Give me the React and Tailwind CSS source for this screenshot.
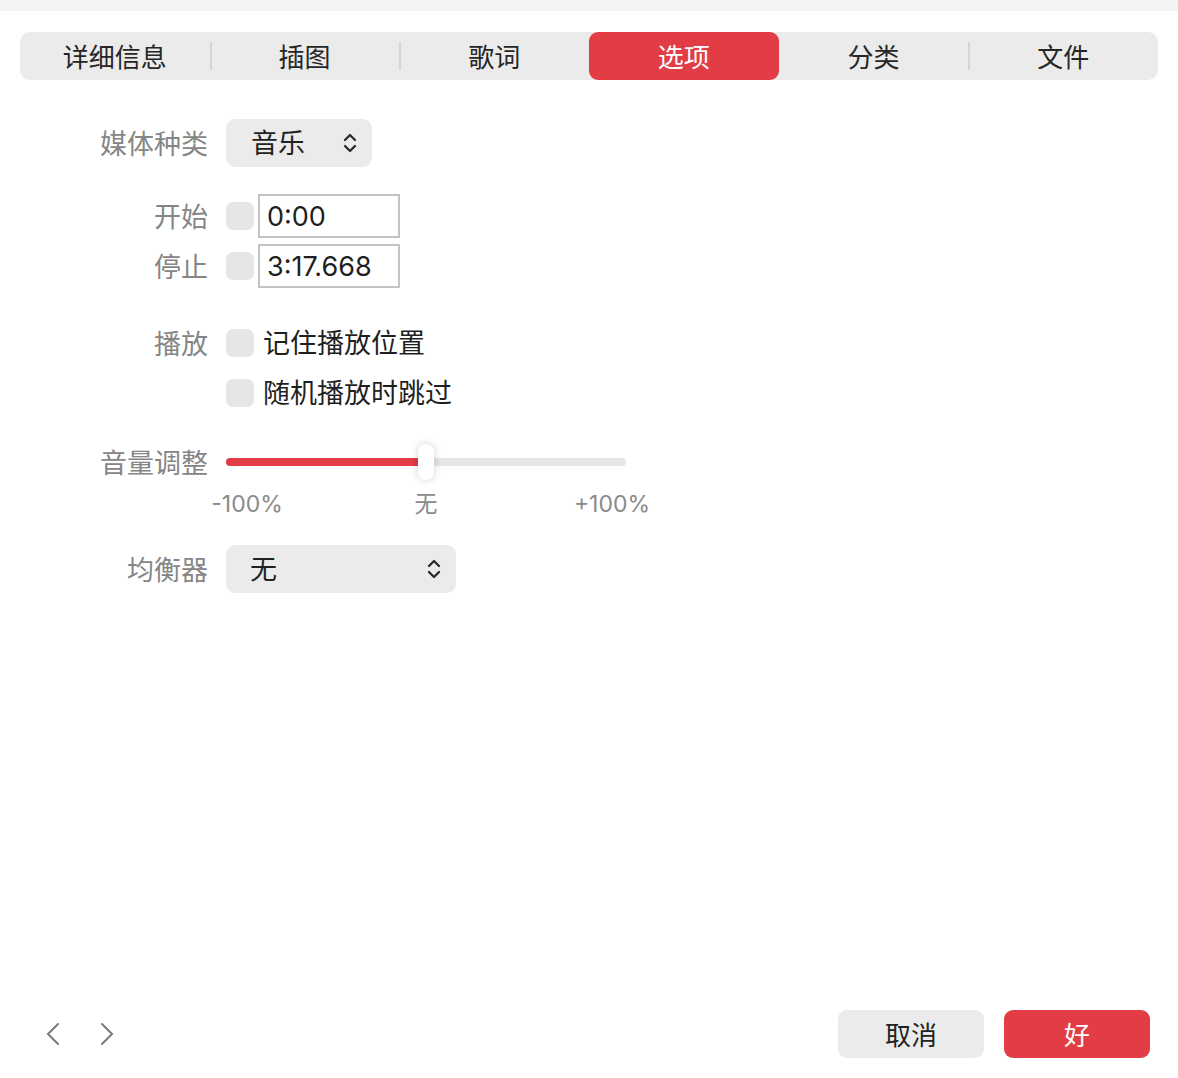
// Song info dialog — "选项" (Options) tab

const FONT = { fontFamily: '"Inter", "Noto Sans CJK SC", sans-serif' };

const tabs = ["详细信息", "插图", "歌词", "选项", "分类", "文件"];
const ACTIVE = 3;

function UpDown() {
  return (
    <svg width="16" height="24" viewBox="0 0 16 24" fill="none" stroke="#2a2a2a" strokeWidth="2.3" strokeLinecap="round" strokeLinejoin="round">
      <path d="M3 9 L8 4 L13 9" />
      <path d="M3 15 L8 20 L13 15" />
    </svg>
  );
}

function Check() {
  return <div className="w-[28px] h-[28px] rounded-[7px] bg-[#e6e6e6] shrink-0" />;
}

function Label({ children }) {
  return <div className="w-[208px] shrink-0 text-right text-[27px] text-[#858585] leading-none pt-[2px]">{children}</div>;
}

export default function App() {
  return (
    <div style={FONT} className="w-[1178px] h-[1078px] bg-white flex flex-col">
      <div className="h-[11px] bg-[#f4f4f4]" />

      {/* tab strip */}
      <div className="mt-[21px] mx-[20px] h-[48px] rounded-[10px] bg-[#ebebeb] flex items-center">
        {tabs.map((t, i) => (
          <div key={t} className="flex-1 h-full flex items-center relative">
            {i > 0 && i !== ACTIVE && i !== ACTIVE + 1 && (
              <div className="absolute left-0 top-[10px] h-[28px] w-[2px] bg-[#d4d4d4]" />
            )}
            <div
              className={`w-full h-full flex items-center justify-center text-[26px] pt-[2px] rounded-[9px] ${
                i === ACTIVE ? "bg-[#e23c45] text-white" : "text-[#262626]"
              }`}
            >
              {t}
            </div>
          </div>
        ))}
      </div>

      {/* media kind */}
      <div className="mt-[39px] flex items-center h-[48px]">
        <Label>媒体种类</Label>
        <div className="ml-[18px] w-[146px] h-[48px] rounded-[9px] bg-[#ebebeb] flex items-center pl-[25px] pr-[14px] justify-between">
          <span className="text-[27px] text-[#222] pt-[2px]">音乐</span>
          <UpDown />
        </div>
      </div>

      {/* start / stop */}
      <div className="mt-[27px] flex items-center h-[44px]">
        <Label>开始</Label>
        <div className="ml-[18px]"><Check /></div>
        <div className="ml-[4px] w-[142px] h-[44px] border-2 border-[#c4c4c4] flex items-center pl-[7px] pt-[2px] text-[27px] text-[#1f1f1f]">0:00</div>
      </div>
      <div className="mt-[6px] flex items-center h-[44px]">
        <Label>停止</Label>
        <div className="ml-[18px]"><Check /></div>
        <div className="ml-[4px] w-[142px] h-[44px] border-2 border-[#c4c4c4] flex items-center pl-[7px] pt-[2px] text-[27px] text-[#1f1f1f]">3:17.668</div>
      </div>

      {/* playback */}
      <div className="mt-[35px] flex items-center h-[40px]">
        <Label>播放</Label>
        <div className="ml-[18px]"><Check /></div>
        <span className="ml-[9px] text-[27px] text-[#1f1f1f] pt-[2px]">记住播放位置</span>
      </div>
      <div className="mt-[10px] flex items-center h-[40px]">
        <div className="w-[208px] shrink-0" />
        <div className="ml-[18px]"><Check /></div>
        <span className="ml-[9px] text-[27px] text-[#1f1f1f] pt-[2px]">随机播放时跳过</span>
      </div>

      {/* volume */}
      <div className="mt-[29px] flex items-center h-[40px]">
        <Label>音量调整</Label>
        <div className="ml-[18px] w-[400px] h-[8px] rounded-full bg-[#e6e6e6] relative">
          <div className="h-full w-[200px] rounded-full bg-[#e23c45]" />
          <div className="absolute left-[192px] top-[-14px] w-[16px] h-[36px] rounded-full bg-white shadow-[0_0_8px_rgba(0,0,0,0.18)]" />
        </div>
      </div>
      <div className="mt-[8px] h-[28px] flex items-center text-[23px] text-[#8a8a8a]">
        <div className="w-[187px] shrink-0" />
        <div className="w-[120px] text-center">-100%</div>
        <div className="ml-[59px] w-[120px] text-center">无</div>
        <div className="ml-[66px] w-[120px] text-center">+100%</div>
      </div>

      {/* equalizer */}
      <div className="mt-[27px] flex items-center h-[48px]">
        <Label>均衡器</Label>
        <div className="ml-[18px] w-[230px] h-[48px] rounded-[9px] bg-[#ebebeb] flex items-center pl-[24px] pr-[14px] justify-between">
          <span className="text-[27px] text-[#222] pt-[2px]">无</span>
          <UpDown />
        </div>
      </div>

      {/* footer */}
      <div className="mt-auto mb-[20px] flex items-center h-[48px] px-[28px]">
        <div className="flex items-center gap-[40px] pl-[18px]">
          <svg width="14" height="24" viewBox="0 0 14 24" fill="none" stroke="#7a7a7a" strokeWidth="2" strokeLinecap="round">
            <path d="M12 2 L2 12 L12 22" />
          </svg>
          <svg width="14" height="24" viewBox="0 0 14 24" fill="none" stroke="#7a7a7a" strokeWidth="2" strokeLinecap="round">
            <path d="M2 2 L12 12 L2 22" />
          </svg>
        </div>
        <div className="ml-auto flex items-center gap-[20px]">
          <div className="w-[146px] h-[48px] rounded-[9px] bg-[#ebebeb] flex items-center justify-center text-[26px] pt-[2px] text-[#222]">取消</div>
          <div className="w-[146px] h-[48px] rounded-[9px] bg-[#e23c45] flex items-center justify-center text-[26px] pt-[2px] text-white">好</div>
        </div>
      </div>
    </div>
  );
}
